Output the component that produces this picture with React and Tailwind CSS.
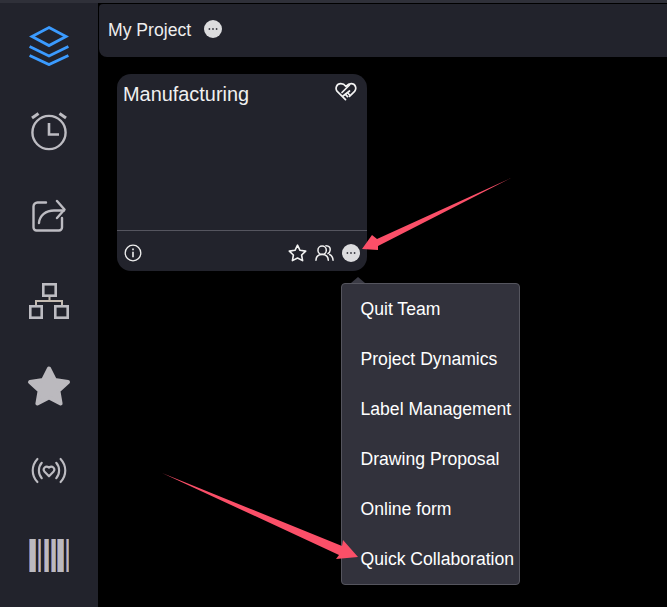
import React from "react";

function Layers() {
  return (
    <svg width="40" height="40" viewBox="0 0 40 40" fill="none" stroke="#3b9bff" strokeWidth="2.8">
      <path d="M20 1.6 L37 10.6 L20 19.6 L3 10.6 Z" />
      <path d="M0.6 20.6 L20 30 L39.4 20.6" />
      <path d="M0.6 29.6 L20 38.6 L39.4 29.6" />
    </svg>
  );
}

function Alarm() {
  return (
    <svg width="40" height="42" viewBox="0 1.5 40 42" fill="none" stroke="#bdbcc2" strokeWidth="2.4" strokeLinecap="butt">
      <circle cx="20" cy="24" r="16.6" />
      <path d="M20 14.5 V26 H30" strokeWidth="2.6" />
      <path d="M3 9.5 L9.5 5" strokeWidth="3" />
      <path d="M37 9.5 L30.5 5" strokeWidth="3" />
    </svg>
  );
}

function Share() {
  return (
    <svg width="34" height="34" viewBox="0 0 34 34" fill="none" stroke="#bdbcc2" strokeWidth="2.4" strokeLinecap="round" strokeLinejoin="round">
      <path d="M14 3.5 H5.5 a4 4 0 0 0 -4 4 V28.5 a3 3 0 0 0 3 3 H27 a3 3 0 0 0 3 -3 V19" />
      <path d="M7 24 C7.5 16.5 14 11.5 22 11.5 H32" />
      <path d="M25 2 L32.5 10.5 L25 19" />
    </svg>
  );
}

function Org() {
  return (
    <svg width="40" height="36" viewBox="0 0 40 36" fill="none" stroke="#bdbcc2" strokeWidth="2.6">
      <rect x="14.3" y="1.3" width="12.4" height="11.4" />
      <path d="M20.5 14 V18 M7 22 V18 H33 V22" stroke="#c4bbb2" strokeWidth="2" />
      <rect x="1.3" y="23.3" width="11.4" height="11.4" />
      <rect x="26.3" y="23.3" width="12.4" height="11.4" />
    </svg>
  );
}

function BigStar() {
  return (
    <svg width="44" height="42" viewBox="0 0 44 42">
      <path
        d="M22 3.5 L27.8 15 L41 17 L31.4 25.8 L33.6 38.5 L22 32.4 L10.4 38.5 L12.6 25.8 L3 17 L16.2 15 Z"
        fill="#bbb9be"
        stroke="#bbb9be"
        strokeWidth="4"
        strokeLinejoin="round"
      />
    </svg>
  );
}

function Broadcast() {
  return (
    <svg width="38" height="27" viewBox="0 0 38 28" fill="none" stroke="#bdbcc2" strokeWidth="2.2" strokeLinecap="round">
      <path d="M7 2 C0.5 9 0.5 19 7 26" />
      <path d="M31 2 C37.5 9 37.5 19 31 26" />
      <path d="M11.5 6 C7.5 10.5 7.5 17.5 11.5 22" />
      <path d="M26.5 6 C30.5 10.5 30.5 17.5 26.5 22" />
      <path d="M19 20 L14.2 15 C12 12 15.5 8.5 19 11 C22.5 8.5 26 12 23.8 15 Z" strokeLinejoin="round" />
    </svg>
  );
}

function Barcode() {
  const bars = [[0, 7], [9, 3], [15, 5], [22, 5], [28, 7], [37, 3]];
  return (
    <svg width="40" height="33" viewBox="0 0 40 33">
      {bars.map(([x, w]) => (
        <g key={x}>
          <rect x={x} y="0" width={w} height="33" fill="#bbbabf" />
          <rect x={x} y="0" width="0.8" height="33" fill="#5a6ab0" />
          <rect x={x + w - 0.8} y="0" width="0.8" height="33" fill="#b08a60" />
        </g>
      ))}
    </svg>
  );
}

function Dots({ size }) {
  return (
    <svg width={size} height={size} viewBox="0 0 18 18">
      <circle cx="9" cy="9" r="9" fill="#dcdcde" />
      <circle cx="5.4" cy="9" r="0.9" fill="#3a3a42" />
      <circle cx="9" cy="9" r="0.9" fill="#3a3a42" />
      <circle cx="12.6" cy="9" r="0.9" fill="#3a3a42" />
    </svg>
  );
}

function Handshake() {
  return (
    <svg width="22" height="19" viewBox="0 0 22 19" fill="none" stroke="#f2f2f2" strokeWidth="1.7" strokeLinejoin="round" strokeLinecap="round">
      <path d="M10.5 17.6 L2.2 9.4 C-0.2 6.4 1.6 1.6 5.8 1.6 C8 1.6 9.6 2.6 11 4.4 C12.6 2.6 14 1.6 16.2 1.6 C20.4 1.6 22 6.4 19.6 9.4 L14.5 14.4" />
      <path d="M14.5 3 L7 10.5" />
      <path d="M8 14 L14.5 9" />
      <path d="M10.5 12.4 L12.5 14.6 M12.6 10.8 L14.6 13" />
    </svg>
  );
}

function Info() {
  return (
    <svg width="18" height="18" viewBox="0 0 18 18" fill="none" stroke="#eeeeee" strokeWidth="1.3">
      <circle cx="9" cy="9" r="7.8" />
      <path d="M9 7.8 V13.2" strokeWidth="1.6" />
      <path d="M9 4.6 V6.2" strokeWidth="1.6" />
    </svg>
  );
}

function SmallStar() {
  return (
    <svg width="19" height="18" viewBox="0 0 19 18" fill="none" stroke="#f2f2f2" strokeWidth="1.6" strokeLinejoin="round">
      <path d="M9.5 1.2 L12 6.3 L17.7 7.1 L13.6 11 L14.6 16.6 L9.5 14 L4.4 16.6 L5.4 11 L1.3 7.1 L7 6.3 Z" />
    </svg>
  );
}

function Users() {
  return (
    <svg width="19" height="18" viewBox="0 0 20 18" fill="none" stroke="#f0f0f0" strokeWidth="1.6" strokeLinecap="round">
      <circle cx="7.5" cy="6" r="4.4" />
      <path d="M1 16.6 C1.2 12.6 4 10.6 7.5 10.6 C11 10.6 13.8 12.6 14 16.6" />
      <path d="M11.5 1.4 C15 1.4 16.2 3.6 16 5.8 C15.8 7.8 14.8 9 13.6 9.6" />
      <path d="M15.4 10.6 C17.6 11.6 18.8 13.6 19 16.6" />
    </svg>
  );
}

function Arrow({ className, points, viewBox, width, height }) {
  return (
    <svg className={className} width={width} height={height} viewBox={viewBox}>
      <polygon points={points} fill="#fb4f68" />
    </svg>
  );
}

const navItems = [<Layers />, <Alarm />, <Share />, <Org />, <BigStar />, <Broadcast />, <Barcode />];

const menu = ["Quit Team", "Project Dynamics", "Label Management", "Drawing Proposal", "Online form", "Quick Collaboration"];

export default function App() {
  return (
    <div className="relative w-[667px] h-[607px] overflow-hidden bg-black font-['Liberation_Sans',Arial,sans-serif] text-white">
      <div className="h-[3px] bg-[#2f3039]" />
      <div className="flex h-[604px]">
        <aside className="w-[98px] shrink-0 bg-[#22232c] flex flex-col items-center">
          {navItems.map((icon, i) => (
            <div key={i} className="h-[85px] flex items-center justify-center">
              {icon}
            </div>
          ))}
        </aside>
        <main className="flex-1 min-w-0 pl-px">
          <header className="h-[53px] mt-px bg-[#22232c] rounded-bl-[8px] rounded-tl-[4px] flex items-center pl-[9px] gap-[13px]">
            <span className="text-[17.6px] text-[#eeeeee] leading-none">My Project</span>
            <span className="flex -translate-y-[2px]">
              <Dots size={18} />
            </span>
          </header>
          <section className="ml-[18px] mt-[17px] w-[250px] h-[197px] bg-[#22232c] rounded-[14px] flex flex-col">
            <div className="h-[157px] flex items-start justify-between pl-[6px] pr-[10px] pt-[8px] border-b border-[#55555f]">
              <span className="text-[19.9px] leading-[24px] text-[#f0f0f0]">Manufacturing</span>
              <span className="flex">
                <Handshake />
              </span>
            </div>
            <div className="flex-1 flex items-center justify-between pl-[7px] pr-[7px] pt-[3px]">
              <Info />
              <div className="flex items-center gap-[8px]">
                <SmallStar />
                <Users />
                <Dots size={18} />
              </div>
            </div>
          </section>
        </main>
      </div>

      <div className="absolute left-[341px] top-[283px] w-[179px] h-[302px] bg-[#32323c] border border-[#55555e] rounded-[4px] pl-[18.5px]">
        <div className="absolute -top-[7px] left-[9px] w-0 h-0 border-x-[7px] border-x-transparent border-b-[6px] border-b-[#3a3a44]" />
        {menu.map((m) => (
          <div key={m} className="h-[50px] flex items-center text-[17.6px] text-white whitespace-nowrap">
            {m}
          </div>
        ))}
      </div>

      <Arrow
        className="absolute left-[360px] top-[176px]"
        width={155}
        height={76}
        viewBox="0 0 155 76"
        points="151,2 17,63 12,59 2,73 18,74 18,70"
      />
      <Arrow
        className="absolute left-[160px] top-[472px]"
        width={200}
        height={90}
        viewBox="0 0 200 90"
        points="2,1 182,74 183,68 198,85 176,87 179,83"
      />
    </div>
  );
}
